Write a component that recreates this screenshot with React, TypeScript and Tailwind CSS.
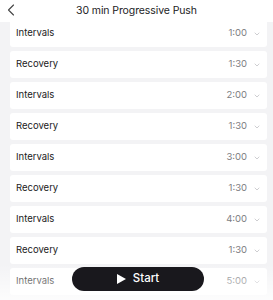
import { ChevronDown, ChevronLeft } from 'lucide-react';

const steps = [
  { name: 'Intervals', time: '1:00' },
  { name: 'Recovery', time: '1:30' },
  { name: 'Intervals', time: '2:00' },
  { name: 'Recovery', time: '1:30' },
  { name: 'Intervals', time: '3:00' },
  { name: 'Recovery', time: '1:30' },
  { name: 'Intervals', time: '4:00' },
  { name: 'Recovery', time: '1:30' },
  { name: 'Intervals', time: '5:00' },
];

const StepRow = ({ name, time }: { name: string; time: string }) => (
  <div className="flex h-[27px] shrink-0 items-center rounded-[3px] bg-white pl-[6px] pr-[6px]">
    <span className="flex-1 text-[9.5px] text-[#222]">{name}</span>
    <span className="text-[9.5px] text-[#7d7d82]">{time}</span>
    <ChevronDown className="ml-[6px] h-[8px] w-[8px] text-[#b5b5ba]" strokeWidth={2} />
  </div>
);

export default function App() {
  return (
    <div
      className="relative flex h-[300px] w-[273px] flex-col overflow-hidden bg-[#f3f3f5]"
      style={{ fontFamily: 'Inter, "Liberation Sans", sans-serif' }}
    >
      <div className="relative z-10 flex h-[22px] shrink-0 items-center justify-center bg-white">
        <ChevronLeft className="absolute left-[1px] top-0 h-[20px] w-[20px] text-[#444]" strokeWidth={1.3} />
        <h1 className="text-[10.5px] tracking-[-0.1px] text-[#1c1c1e]">30 min Progressive Push</h1>
      </div>

      <div className="-mt-[2px] flex flex-col gap-[4px] pl-[10px] pr-[6px]">
        {steps.map((s, i) => (
          <StepRow key={i} name={s.name} time={s.time} />
        ))}
      </div>

      <div className="pointer-events-none absolute inset-x-0 bottom-0 h-[36px] bg-gradient-to-b from-white/0 to-white/80" />

      <button className="absolute left-[72px] top-[267px] flex h-[24px] w-[132px] items-center justify-center gap-[7px] rounded-full bg-[#19181d] text-[11.5px] font-medium text-white">
        <svg width="9" height="10" viewBox="0 0 9 10">
          <path d="M0 0 L9 5 L0 10 Z" fill="white" />
        </svg>
        Start
      </button>
    </div>
  );
}
